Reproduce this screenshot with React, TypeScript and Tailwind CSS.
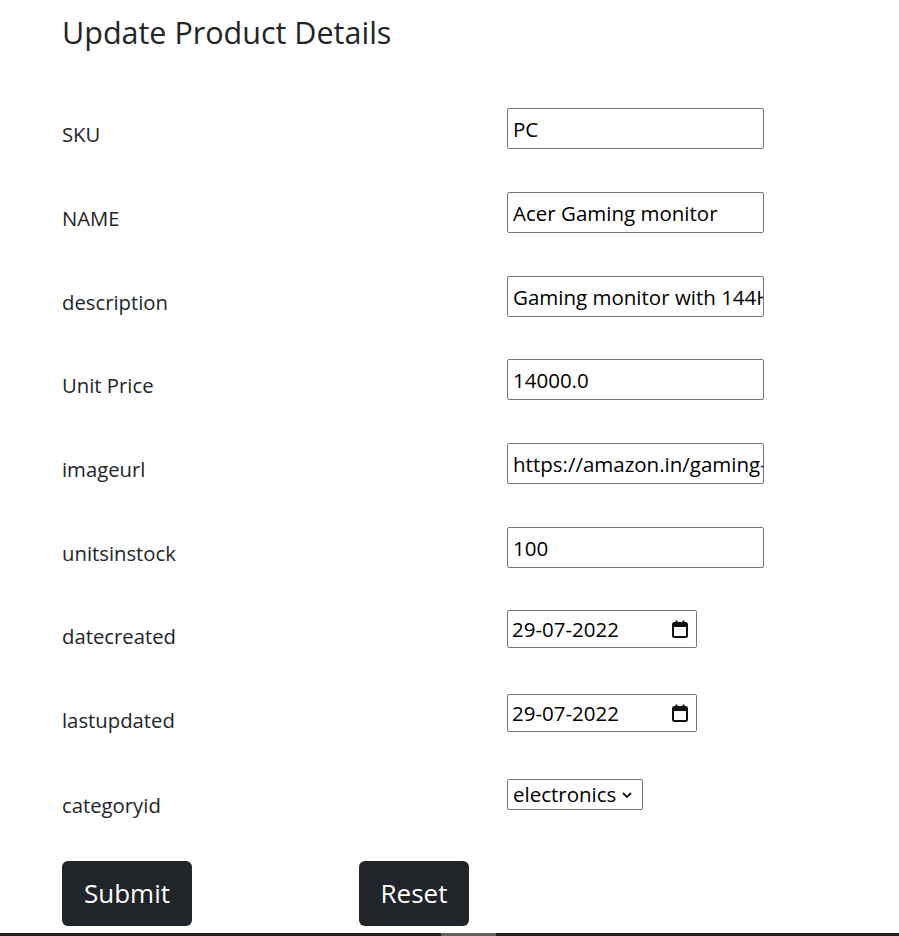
import React from 'react';

const fields: { label: string; value: string; h: string }[] = [
    { label: 'SKU', value: 'PC', h: 'h-[84px]' },
    { label: 'NAME', value: 'Acer Gaming monitor', h: 'h-[84px]' },
    { label: 'description', value: 'Gaming monitor with 144Hz refresh rate', h: 'h-[83px]' },
    { label: 'Unit Price', value: '14000.0', h: 'h-[84px]' },
    { label: 'imageurl', value: 'https://amazon.in/gaming-monitor.png', h: 'h-[84px]' },
    { label: 'unitsinstock', value: '100', h: 'h-[83px]' },
];

const CalendarIcon: React.FC = () => (
    <svg width="16" height="18" viewBox="0 0 16 18" className="shrink-0">
        <rect x="1" y="3" width="14" height="14" rx="1.5" fill="none" stroke="#111" strokeWidth="2" />
        <rect x="1" y="3" width="14" height="4" fill="#111" />
        <rect x="3.5" y="0.5" width="2" height="3" fill="#111" />
        <rect x="10.5" y="0.5" width="2" height="3" fill="#111" />
    </svg>
);

const DateField: React.FC<{ value: string }> = ({ value }) => (
    <div className="flex h-[38px] w-[190px] items-center justify-between rounded-[2px] border border-[#767676] pl-[4px] pr-[8px] text-[20.5px] text-black">
        <span>{value}</span>
        <CalendarIcon />
    </div>
);

const Row: React.FC<{ label: string; h: string; children: React.ReactNode }> = ({ label, h, children }) => (
    <div className={`grid ${h} grid-cols-[445px_1fr] items-start`}>
        <label className="pt-[10px] text-[20.3px] leading-[32px] text-[#212529]">{label}</label>
        <div>{children}</div>
    </div>
);

const App: React.FC = () => {
    return (
        <div className="flex h-[936px] flex-col bg-white" style={{ fontFamily: '"Open Sans", sans-serif' }}>
            <div className="flex-1 px-[62px]">
                <h2 className="pt-[9px] text-[30.5px] leading-[46px] text-[#212529]">Update Product Details</h2>

                <form className="mt-[53px]">
                    {fields.map((f) => (
                        <Row key={f.label} label={f.label} h={f.h}>
                            <input
                                readOnly
                                value={f.value}
                                className="h-[41px] w-[257px] rounded-[2px] border border-[#767676] pl-[5px] pr-0 text-[20.5px] text-black outline-none"
                            />
                        </Row>
                    ))}
                    <Row label="datecreated" h="h-[84px]">
                        <DateField value="29-07-2022" />
                    </Row>
                    <Row label="lastupdated" h="h-[85px]">
                        <DateField value="29-07-2022" />
                    </Row>
                    <Row label="categoryid" h="h-[82px]">
                        <div className="flex h-[31px] w-[136px] items-center gap-[5px] rounded-[2px] border border-[#767676] pl-[5px] text-[20.5px] text-black">
                            <span>electronics</span>
                            <svg width="12" height="12" viewBox="0 0 12 12">
                                <path d="M2 4 L6 8 L10 4" fill="none" stroke="#111" strokeWidth="1.8" />
                            </svg>
                        </div>
                    </Row>

                    <div className="flex gap-[167px]">
                        <button type="button" className="h-[65px] w-[130px] rounded-[6px] bg-[#212529] text-[26px] text-white">
                            Submit
                        </button>
                        <button type="button" className="h-[65px] w-[110px] rounded-[6px] bg-[#212529] text-[26px] text-white">
                            Reset
                        </button>
                    </div>
                </form>
            </div>
            <div className="flex h-[3px] bg-[#202124]">
                <div className="ml-[441px] w-[55px] bg-[#5f6368]" />
            </div>
        </div>
    );
};

export default App;
